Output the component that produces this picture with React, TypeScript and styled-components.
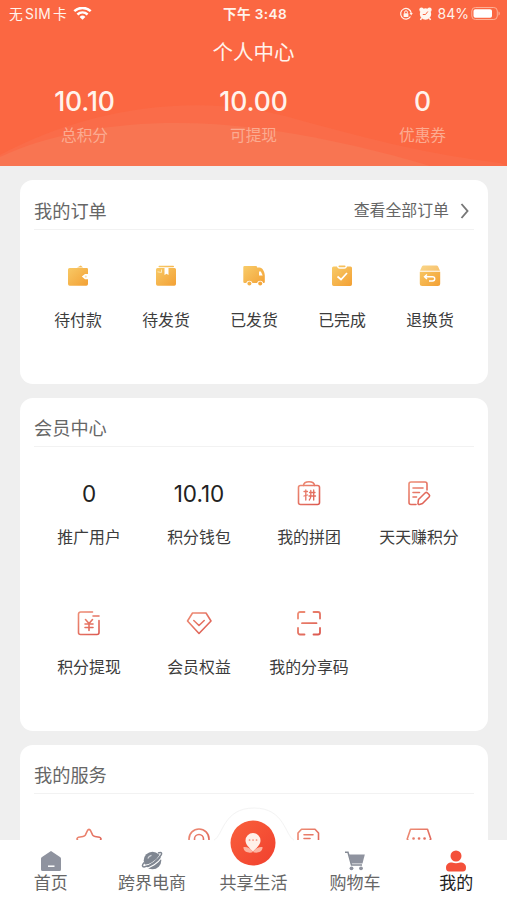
import React from 'react';
import styled, { createGlobalStyle } from 'styled-components';

const GlobalStyle = createGlobalStyle`
  *, *::before, *::after { box-sizing: border-box; }
  body {
    margin: 0;
    background: #efefef;
    font-family: Inter, "Noto Sans CJK SC", sans-serif;
    color: #333;
  }
  svg { display: block; }
`;

const Screen = styled.div`
  display: flex;
  flex-direction: column;
  width: 507px;
  height: 900px;
  overflow: hidden;
  background: #efefef;
`;

const Header = styled.header`
  position: relative;
  flex: none;
  height: 166px;
  background: #fb6742;
  color: #fff3ec;
`;

const HeaderWaves = styled.svg`
  position: absolute;
  inset: 0;
`;

const HeaderContent = styled.div`
  position: relative;
`;

const StatusBar = styled.div`
  display: grid;
  grid-template-columns: 1fr auto 1fr;
  align-items: center;
  height: 28px;
  padding: 0 6px 0 9px;
  font-size: 14px;
  line-height: 28px;
`;

const StatusGroup = styled.div<{ $end?: boolean }>`
  display: flex;
  align-items: center;
  justify-content: ${(p) => (p.$end ? 'flex-end' : 'flex-start')};
  gap: 6px;
  white-space: nowrap;
`;

const Carrier = styled.span`
  display: flex;
  gap: 2px;
  font-size: 13.8px;
  letter-spacing: 0.3px;
`;

const Clock = styled.div`
  font-weight: 600;
  font-size: 13.6px;
  letter-spacing: 0.4px;
`;

const BatteryGroup = styled.div`
  display: flex;
  align-items: center;
  gap: 2px;
`;

const PageTitle = styled.h1`
  margin: 10px 0 0;
  font-size: 20.5px;
  font-weight: 400;
  line-height: 30px;
  text-align: center;
`;

const Stats = styled.div`
  display: grid;
  grid-template-columns: repeat(3, 1fr);
  margin-top: 17px;
  text-align: center;
`;

const StatValue = styled.div`
  font-size: 26.5px;
  font-weight: 500;
  line-height: 32px;
  letter-spacing: -0.1px;
`;

const StatLabel = styled.div`
  margin-top: 7px;
  font-size: 15.7px;
  line-height: 24px;
  color: #fbab91;
`;

const Content = styled.main`
  flex: 1;
  min-height: 0;
  overflow: hidden;
  display: flex;
  flex-direction: column;
  gap: 14px;
  padding: 14px 19px 0 20px;
`;

const Card = styled.section<{ $height: number }>`
  flex: none;
  height: ${(p) => p.$height}px;
  padding: 0 14px;
  border-radius: 13px;
  background: #fff;
`;

const CardHead = styled.div<{ $height: number }>`
  display: flex;
  align-items: center;
  justify-content: space-between;
  height: ${(p) => p.$height}px;
  padding-top: 12px;
  border-bottom: 1px solid #f2f2f2;
`;

const CardTitle = styled.h2`
  margin: 0;
  font-size: 18.2px;
  font-weight: 400;
  line-height: 26px;
  color: #666;
`;

const MoreLink = styled.div`
  display: flex;
  align-items: center;
  gap: 11px;
  padding: 1px 4px 0 0;
  font-size: 15.9px;
  line-height: 24px;
  color: #666;
`;

const ItemGrid = styled.div<{ $columns: number }>`
  display: grid;
  grid-template-columns: repeat(${(p) => p.$columns}, 1fr);
  grid-auto-rows: 129.5px;
  padding-top: 31px;
`;

const Item = styled.div`
  display: flex;
  flex-direction: column;
  align-items: center;
  gap: 18px;
`;

const ItemFigure = styled.div`
  display: flex;
  align-items: center;
  height: 30px;
  font-size: 22.5px;
  color: #222;
`;

const ItemLabel = styled.div`
  font-size: 15.9px;
  line-height: 24px;
  white-space: nowrap;
  color: #3c3c3c;
`;

const TabBar = styled.nav`
  position: relative;
  flex: none;
  display: grid;
  grid-template-columns: repeat(5, 1fr);
  height: 60px;
  background: #fff;
`;

const Bump = styled.svg`
  position: absolute;
  left: 50%;
  top: -33px;
  transform: translateX(-50%);
`;

const Tab = styled.div<{ $active?: boolean }>`
  position: relative;
  display: flex;
  flex-direction: column;
  align-items: center;
  padding-top: 10px;
  font-size: 17px;
  line-height: 24px;
  white-space: nowrap;
  color: ${(p) => (p.$active ? '#222' : '#666')};
`;

const TabIcon = styled.div`
  display: flex;
  justify-content: center;
  height: 21px;
`;

const CenterButton = styled.div`
  display: flex;
  height: 46px;
  margin: -30px 0 5px;
`;

const Gold = ({ children }: { children: React.ReactNode }) => (
  <svg width="26" height="26" viewBox="0 0 26 26" fill="url(#gold)">{children}</svg>
);

const Red = ({ children }: { children: React.ReactNode }) => (
  <svg width="28" height="28" viewBox="0 0 28 28" fill="none" stroke="url(#red)" strokeWidth="1.6" strokeLinecap="round" strokeLinejoin="round">
    {children}
  </svg>
);

const GradientDefs = styled.svg`
  position: absolute;
`;

const Gradients = () => (
  <GradientDefs width="0" height="0">
    <defs>
      <linearGradient id="gold" gradientUnits="userSpaceOnUse" x1="4" y1="3" x2="22" y2="23">
        <stop offset="0" stopColor="#f8ca67" />
        <stop offset="1" stopColor="#f3a135" />
      </linearGradient>
      <linearGradient id="red" gradientUnits="userSpaceOnUse" x1="4" y1="3" x2="24" y2="25">
        <stop offset="0" stopColor="#ee8d75" />
        <stop offset="1" stopColor="#dc5a51" />
      </linearGradient>
    </defs>
  </GradientDefs>
);

const WalletIcon = () => (
  <Gold>
    <path d="M12 4.500 15.800 2.600 18 4.500Z" />
    <path d="M4.500 5H21.800a1.200 1.200 0 0 1 1.200 1.200V11H20l-3.200 2.600L20 16.200h3V21A1.700 1.700 0 0 1 21.300 22.700H4.700A1.700 1.700 0 0 1 3 21V6.500A1.500 1.500 0 0 1 4.500 5Z" />
    <circle cx="20.800" cy="13.600" r="1.100" fill="#fbe1ad" />
  </Gold>
);

const BoxIcon = () => (
  <Gold>
    <rect x="5.500" y="2.800" width="15.500" height="1.500" rx=".7" />
    <path d="M4.500 5h7v7l2-1.200 2 1.200V5H21.500A1.500 1.500 0 0 1 23 6.500V21a1.700 1.700 0 0 1-1.700 1.700H4.700A1.700 1.700 0 0 1 3 21V6.500A1.500 1.500 0 0 1 4.500 5Z" />
    <path d="M4.500 8.800 8.500 9.500 8.500 6.500" fill="none" stroke="#fdeab8" />
  </Gold>
);

const TruckIcon = () => (
  <Gold>
    <path d="M3.500 3H15a1 1 0 0 1 1 1v.500h2.500c3 0 5.300 4.500 5.300 8v6.500a1 1 0 0 1-1 1h-.5a3.300 3.300 0 0 0-6.300 0H11.500a3.300 3.300 0 0 0-6.300 0H3.500a1.200 1.200 0 0 1-1.200-1.200V4.200A1.200 1.200 0 0 1 3.500 3Z" />
    <circle cx="8.400" cy="20.500" r="2" />
    <circle cx="19.200" cy="20.500" r="2" />
    <path d="M18 8.500h1.800l1.900 4H18Z" fill="#fff" />
  </Gold>
);

const DoneIcon = () => (
  <Gold>
    <path d="M4.500 3.500H8c.4 1.800 1.500 2.200 2.500 2.200h5c1 0 2.100-.4 2.500-2.200h3.500A1.500 1.500 0 0 1 23 5v16.200a1.700 1.700 0 0 1-1.700 1.700H4.700A1.700 1.700 0 0 1 3 21.200V5a1.500 1.500 0 0 1 1.500-1.500Z" />
    <rect x="9.500" y="2.500" width="7" height="1.700" rx=".8" />
    <path d="m8.500 13.500 3.500 3 6-6.500" fill="none" stroke="#fff" strokeWidth="1.700" />
  </Gold>
);

const ReturnIcon = () => (
  <Gold>
    <path d="M6.500 2.500h13a2 2 0 0 1 1.600.9L23 7.700H3l1.900-4.300a2 2 0 0 1 1.600-.9Z" opacity=".8" />
    <path d="M2.800 8.800h20.400v11.700a2.500 2.500 0 0 1-2.500 2.500H5.300a2.500 2.500 0 0 1-2.500-2.500Z" />
    <path d="m10 11.500-2.500 2.200L10 16m-2-2.300h7.500c3 0 3 4.300 0 4.300H12" fill="none" stroke="#fff" strokeWidth="1.400" />
  </Gold>
);

const GroupBagIcon = () => (
  <Red>
    <rect x="3.500" y="6.500" width="21" height="19" rx="2" />
    <path d="M8.500 6.500C9 1.500 19 1.500 19.500 6.500" />
    <path d="M9 12.500h3.500M10.800 11v10M9 17l3.500-1M14.500 13.500h5.500M14 17h6.500M15.800 11.500V17c0 2-.5 3-1.500 4M18.700 11v10" strokeWidth="1.300" />
  </Red>
);

const NoteEditIcon = () => (
  <Red>
    <path d="M22 11V5a2 2 0 0 0-2-2H6a2 2 0 0 0-2 2v18.500a2 2 0 0 0 2 2h5M8 9h10M8 13.500h6.500M8 18h3.500" />
    <path d="m13.500 20.500 6.800-6.700a1.500 1.500 0 0 1 2 0l1.900 1.900a1.500 1.500 0 0 1 0 2L17.500 24.500l-3 .9a1.200 1.200 0 0 1-1.500-1.500Z" />
  </Red>
);

const WithdrawIcon = () => (
  <Red>
    <path d="M15.500 3H5.500a2 2 0 0 0-2 2v18.500a2 2 0 0 0 2 2H22a2 2 0 0 0 2-2V11.500M18 7h6M15 3h2.500" />
    <path d="m10.500 10.500 3.500 4 3.500-4M10 15h8M10 18.500h8M14 14.500v7" />
  </Red>
);

const DiamondIcon = () => (
  <Red>
    <path d="M7.500 4h13.500l5 8-12 12.500L2.500 12Z" />
    <path d="m8.800 11.500 5.200 5 5.200-5" />
  </Red>
);

const ScanIcon = () => (
  <Red>
    <path d="M9.500 3H5a2 2 0 0 0-2 2v4.500M18.500 3H23a2 2 0 0 1 2 2v4.500M9.500 25.500H5a2 2 0 0 1-2-2V19M18.500 25.500H23a2 2 0 0 0 2-2V19M7 14.200h14.500" strokeWidth="1.800" />
  </Red>
);

const StarIcon = () => (
  <Red>
    <path d="M12.500 4.500c.8-1.500 2.200-1.500 3 0l2.200 4.700q.5 1 2.300 1.300l4.500.8c1.500.4 1.900 1.800.9 2.900l-4.500 4.200.7 6.500-7.600-3-7.600 3 .7-6.500-4.500-4.200c-1-1.100-.6-2.500.9-2.900l4.500-.8q1.800-.3 2.300-1.300Z" />
  </Red>
);

const PinIcon = () => (
  <Red>
    <path d="M14 26c-5-4-10-8-10-13a10 10 0 0 1 20 0C24 18 19 22 14 26Z" />
    <circle cx="14" cy="13" r="4.500" />
  </Red>
);

const MessageIcon = () => (
  <Red>
    <path d="M3 24V7L6.500 3.200h13.500l3.500 3.800V24ZM9 8.700h9M9 12.500h6" />
  </Red>
);

const ShopIcon = () => (
  <Red>
    <path d="M5.500 3.200h17l3.300 9.800-2 3v9H4.200v-9l-2-3Z" />
    <path d="M8.500 12.500h.1M14 12.500h.1M19.500 12.500h.1" strokeWidth="2.600" />
  </Red>
);

const WifiIcon = () => (
  <svg width="19" height="14" viewBox="0 0 19 14" fill="none" stroke="#fff" strokeWidth="2.500">
    <path d="M1.300 4.200c4.700-4.400 11.700-4.400 16.400 0M4.400 7.500c3-2.700 7.200-2.700 10.200 0" />
    <path d="M9.500 12.800 6.600 9.900a4.200 4.200 0 0 1 5.800 0Z" fill="#fff" stroke="none" />
  </svg>
);

const LockRotationIcon = () => (
  <svg width="14" height="14" viewBox="0 0 14 14" fill="none" stroke="#fff3ec">
    <path d="M11.500 9.500A5.300 5.300 0 1 1 12.200 6" strokeWidth="1.200" />
    <path d="M10.500 6h3.300l-1.600 2.500Z" fill="#fff3ec" stroke="none" />
    <rect x="4.600" y="6.200" width="4.800" height="3.800" rx=".5" fill="#fff3ec" stroke="none" />
    <path d="M5.600 6.300V5.200a1.400 1.400 0 0 1 2.800 0v1.100" />
  </svg>
);

const AlarmIcon = () => (
  <svg width="13" height="14" viewBox="0 0 13 14" fill="#fff6f0">
    <circle cx="2.500" cy="2.800" r="2.200" />
    <circle cx="10.500" cy="2.800" r="2.200" />
    <circle cx="6.500" cy="7" r="5.700" />
    <path d="m2.500 11-1 2M10.500 11l1 2" stroke="#fff6f0" strokeWidth="1.500" />
    <path d="M6.500 7.500H3.800M6.500 7.500l2.300-3" stroke="#fb6742" fill="none" />
  </svg>
);

const BatteryIcon = () => (
  <svg width="30" height="14" viewBox="0 0 30 14">
    <rect x=".8" y=".5" width="25.500" height="12" rx="3.500" fill="none" stroke="#fdb096" />
    <rect x="2.500" y="2.200" width="18.500" height="8.600" rx="1.800" fill="#fff" />
    <path d="M27.500 4.500v4c1.700-.5 1.700-3.500 0-4Z" fill="#fdb096" />
  </svg>
);

const ChevronIcon = () => (
  <svg width="10" height="16" viewBox="0 0 10 16" fill="none" stroke="#777" strokeWidth="1.900">
    <path d="m1.500 1 6 7-6 7" />
  </svg>
);

const HomeIcon = () => (
  <svg width="22" height="22" viewBox="0 0 22 22">
    <path d="M11 1 20 7a2 2 0 0 1 1 1.800V19.500a1.500 1.500 0 0 1-1.500 1.500h-17A1.500 1.500 0 0 1 1 19.500V8.800A2 2 0 0 1 2 7Z" fill="#8f939f" />
    <path d="M8 16.200h6.500" stroke="#fff" strokeWidth="1.500" />
  </svg>
);

const PlanetIcon = () => (
  <svg width="22" height="21" viewBox="0 0 22 21">
    <circle cx="11.500" cy="10.500" r="8.800" fill="#7f8691" />
    <path d="M2.500 14.500c4 2.500 13-3 16.800-9.500" fill="none" stroke="#fff" strokeWidth="1.300" />
    <path d="M3.200 12.500C.5 15.500 1 17.300 4 16.800c5-.8 13-6.500 16-11.600 1.500-2.700-.2-3.400-3-2.200" fill="none" stroke="#7f8691" strokeWidth="1.500" />
    <path d="M4.500 18.300C10 17.500 17 13 20.300 8" fill="none" stroke="#fff" strokeWidth="1.100" />
    <path d="M6.800 8.500C7.500 6.700 8.800 5.700 10.500 5.300" fill="none" stroke="#d4d7dc" strokeWidth="1.200" />
  </svg>
);

const CartIcon = () => (
  <svg width="22" height="21" viewBox="0 0 22 21">
    <path d="M1 2.200h3l3.500 12.800H18" fill="none" stroke="#858b95" strokeWidth="1.500" />
    <path d="M4.800 4.500h16l-2.300 9H7.200Z" fill="#8f939f" />
    <circle cx="7.500" cy="18.300" r="1.900" fill="#8f939f" />
    <circle cx="17" cy="18.300" r="1.900" fill="#8f939f" />
  </svg>
);

const ProfileIcon = () => (
  <svg width="22" height="22" viewBox="0 0 22 22" fill="#f4503a">
    <circle cx="11" cy="6" r="5.500" />
    <path d="M7 12.500q4 1.600 8 0c4 0 6 2 6 5.300 0 2.500-1 3.700-3 3.700H4c-2 0-3-1.200-3-3.700 0-3.300 2-5.300 6-5.300Z" />
  </svg>
);

const ShareLifeIcon = () => (
  <svg width="46" height="46" viewBox="0 0 46 46">
    <defs>
      <linearGradient id="share" x1="0" y1="0" x2="1" y2="1">
        <stop offset="0" stopColor="#f9603c" />
        <stop offset="1" stopColor="#f1402e" />
      </linearGradient>
    </defs>
    <circle cx="23" cy="23" r="22.500" fill="url(#share)" />
    <path d="M13.500 27c3.500-.5 7 1 9.500 5-3 1.500-10 .5-9.500-5ZM32.500 27c-3.500-.5-7 1-9.500 5 3 1.500 10 .5 9.500-5Z" fill="#fcb4a2" />
    <path d="M23 31.500c-3.500-3.500-7.500-6.700-7.500-11a7.500 7.500 0 0 1 15 0c0 4.300-4 7.500-7.500 11Z" fill="#fff0e9" />
    <path d="M19.500 20h.1M23 20h.1M26.500 20h.1" stroke="#f58c77" strokeWidth="1.700" strokeLinecap="round" />
  </svg>
);

const orders = [
  { label: '待付款', figure: <WalletIcon /> },
  { label: '待发货', figure: <BoxIcon /> },
  { label: '已发货', figure: <TruckIcon /> },
  { label: '已完成', figure: <DoneIcon /> },
  { label: '退换货', figure: <ReturnIcon /> },
];

const member = [
  { label: '推广用户', figure: '0' },
  { label: '积分钱包', figure: '10.10' },
  { label: '我的拼团', figure: <GroupBagIcon /> },
  { label: '天天赚积分', figure: <NoteEditIcon /> },
  { label: '积分提现', figure: <WithdrawIcon /> },
  { label: '会员权益', figure: <DiamondIcon /> },
  { label: '我的分享码', figure: <ScanIcon /> },
];

const services = [<StarIcon />, <PinIcon />, <MessageIcon />, <ShopIcon />];

const stats = [
  { value: '10.10', label: '总积分' },
  { value: '10.00', label: '可提现' },
  { value: '0', label: '优惠券' },
];

export default function App() {
  return (
    <Screen>
      <GlobalStyle />
      <Gradients />
      <Header>
        <HeaderWaves width="507" height="166" viewBox="0 0 507 166">
          <path d="M0 155C80 112 185 91 285 116C360 137 430 155 500 163L507 166H0Z" fill="#fa6c49" />
          <path d="M0 157C75 122 175 116 270 130C330 139 380 151 430 166H0Z" fill="#f87552" />
        </HeaderWaves>
        <HeaderContent>
          <StatusBar>
            <StatusGroup>
              <Carrier>
                <span>无</span>
                <span>SIM</span>
                <span>卡</span>
              </Carrier>
              <WifiIcon />
            </StatusGroup>
            <Clock>下午 3:48</Clock>
            <StatusGroup $end>
              <LockRotationIcon />
              <AlarmIcon />
              <BatteryGroup>
                <span>84%</span>
                <BatteryIcon />
              </BatteryGroup>
            </StatusGroup>
          </StatusBar>
          <PageTitle>个人中心</PageTitle>
          <Stats>
            {stats.map((s) => (
              <div key={s.label}>
                <StatValue>{s.value}</StatValue>
                <StatLabel>{s.label}</StatLabel>
              </div>
            ))}
          </Stats>
        </HeaderContent>
      </Header>

      <Content>
        <Card $height={204}>
          <CardHead $height={50}>
            <CardTitle>我的订单</CardTitle>
            <MoreLink>
              查看全部订单
              <ChevronIcon />
            </MoreLink>
          </CardHead>
          <ItemGrid $columns={5}>
            {orders.map((o) => (
              <Item key={o.label}>
                <ItemFigure>{o.figure}</ItemFigure>
                <ItemLabel>{o.label}</ItemLabel>
              </Item>
            ))}
          </ItemGrid>
        </Card>

        <Card $height={333}>
          <CardHead $height={49}>
            <CardTitle>会员中心</CardTitle>
          </CardHead>
          <ItemGrid $columns={4}>
            {member.map((m) => (
              <Item key={m.label}>
                <ItemFigure>{m.figure}</ItemFigure>
                <ItemLabel>{m.label}</ItemLabel>
              </Item>
            ))}
          </ItemGrid>
        </Card>

        <Card $height={204}>
          <CardHead $height={49}>
            <CardTitle>我的服务</CardTitle>
          </CardHead>
          <ItemGrid $columns={4}>
            {services.map((icon, i) => (
              <Item key={i}>
                <ItemFigure>{icon}</ItemFigure>
              </Item>
            ))}
          </ItemGrid>
        </Card>
      </Content>

      <TabBar>
        <Bump width="90" height="34" viewBox="0 0 90 34">
          <path d="M0 34C14 33 8 1 45 1S76 33 90 34Z" fill="#fff" />
          <path d="M5 33C14 29 14 1 45 1S76 29 85 33" fill="none" stroke="#f3f3f3" />
        </Bump>
        <Tab>
          <TabIcon><HomeIcon /></TabIcon>
          首页
        </Tab>
        <Tab>
          <TabIcon><PlanetIcon /></TabIcon>
          跨界电商
        </Tab>
        <Tab>
          <CenterButton><ShareLifeIcon /></CenterButton>
          共享生活
        </Tab>
        <Tab>
          <TabIcon><CartIcon /></TabIcon>
          购物车
        </Tab>
        <Tab $active>
          <TabIcon><ProfileIcon /></TabIcon>
          我的
        </Tab>
      </TabBar>
    </Screen>
  );
}
